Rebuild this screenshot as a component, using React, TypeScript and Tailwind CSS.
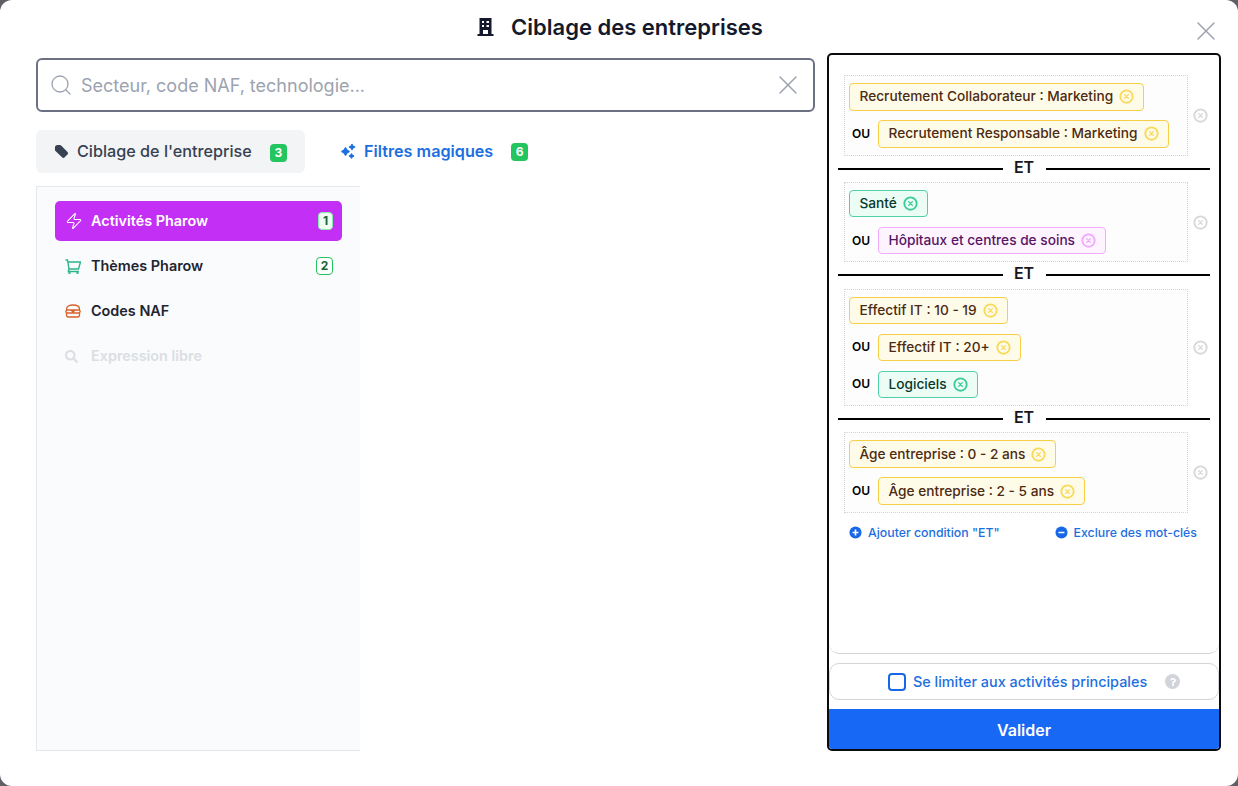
import { LuX, LuSearch, LuZap } from "react-icons/lu";
import { FaSearch, FaQuestion } from "react-icons/fa";

type ChipColor = "yellow" | "green" | "pink";

interface ChipItem {
  label: string;
  color: ChipColor;
}

const chipStyles: Record<ChipColor, { box: string; icon: string }> = {
  yellow: {
    box: "border-[#f6cf47] bg-[#fefce8] text-[#4d2a12]",
    icon: "text-[#f9d95c]",
  },
  green: {
    box: "border-[#4fd0a6] bg-[#ecfdf5] text-[#06392c]",
    icon: "text-[#3ccb9b]",
  },
  pink: {
    box: "border-[#f0abfc] bg-[#fdf4ff] text-[#581563]",
    icon: "text-[#eeaafc]",
  },
};

const groups: ChipItem[][] = [
  [
    { label: "Recrutement Collaborateur : Marketing", color: "yellow" },
    { label: "Recrutement Responsable : Marketing", color: "yellow" },
  ],
  [
    { label: "Santé", color: "green" },
    { label: "Hôpitaux et centres de soins", color: "pink" },
  ],
  [
    { label: "Effectif IT : 10 - 19", color: "yellow" },
    { label: "Effectif IT : 20+", color: "yellow" },
    { label: "Logiciels", color: "green" },
  ],
  [
    { label: "Âge entreprise : 0 - 2 ans", color: "yellow" },
    { label: "Âge entreprise : 2 - 5 ans", color: "yellow" },
  ],
];

const CircleCross = ({ className }: { className: string }) => (
  <svg viewBox="0 0 16 16" fill="none" stroke="currentColor" className={className}>
    <circle cx="8" cy="8" r="6.6" strokeWidth="2" />
    <path d="M6 6l4 4M10 6l-4 4" strokeWidth="1.5" strokeLinecap="round" />
  </svg>
);

const Chip = ({ item }: { item: ChipItem }) => {
  const style = chipStyles[item.color];
  return (
    <div
      className={`flex h-[27.5px] items-center gap-[6px] rounded-[4px] border pl-[9.5px] pr-[9px] text-[13.7px] font-medium ${style.box}`}
    >
      <span>{item.label}</span>
      <CircleCross className={`h-[15px] w-[15px] ${style.icon}`} />
    </div>
  );
};

const Group = ({ items }: { items: ChipItem[] }) => (
  <div className="flex items-center">
    <div className="flex w-[344px] flex-col gap-[9.5px] border border-dotted border-[#d4d4d8] bg-[#fdfdfe] px-[4px] py-[7px]">
      {items.map((item, index) => (
        <div key={item.label} className="flex items-center">
          {index > 0 && (
            <span className="ml-[3px] w-[26px] text-[12px] font-semibold text-black">OU</span>
          )}
          <Chip item={item} />
        </div>
      ))}
    </div>
    <CircleCross className="ml-[5px] h-[15px] w-[15px] text-[#d8d8d8]" />
  </div>
);

const EtSeparator = () => (
  <div className="-ml-[6px] flex h-[26.25px] w-[372px] items-center">
    <div className="h-[2px] flex-1 bg-black" />
    <span className="mb-[4px] w-[43px] text-center text-[16px] font-semibold leading-none text-[#18181b]">ET</span>
    <div className="h-[2px] flex-1 bg-black" />
  </div>
);

const SideItem = ({
  icon,
  label,
  badge,
  active,
  muted,
}: {
  icon: React.ReactNode;
  label: string;
  badge?: string;
  active?: boolean;
  muted?: boolean;
}) => (
  <div
    className={`flex h-[40px] items-center rounded-[5px] pl-[10px] pr-[9px] text-[14.4px] font-semibold ${
      active ? "bg-[#c42ff5] text-white" : muted ? "text-[#dcdee2]" : "text-[#1f2430]"
    }`}
  >
    <span className="flex w-[26px] items-center">{icon}</span>
    <span className="flex-1">{label}</span>
    {badge && (
      <span
        className={`flex h-[18px] items-center justify-center rounded-[4px] border text-[12px] font-bold ${
          active
            ? "w-[15px] border-[#86efac] bg-[#f0fdf4] text-[#166534]"
            : "w-[17px] border-[#22c55e] bg-white text-[#166534]"
        }`}
      >
        {badge}
      </span>
    )}
  </div>
);

const GreenBadge = ({ value }: { value: string }) => (
  <span className="mt-[2px] flex h-[18px] w-[17px] items-center justify-center rounded-[4px] bg-[#22c55e] text-[12px] font-bold text-white">
    {value}
  </span>
);

const App = () => {
  return (
    <div className="relative h-[786px] w-[1238px] overflow-hidden bg-[#5f6066] font-['Inter',sans-serif]">
      <div className="flex h-full flex-col rounded-[12px] bg-white pl-[36px] pr-[17px]">
        <div className="relative flex h-[53px] shrink-0 items-center justify-center pr-[17px] pt-[1px]">
          <svg viewBox="0 0 16 18" className="mr-[17px] h-[18px] w-[17px] text-[#141a2b]" fill="currentColor">
            <path
              fillRule="evenodd"
              d="M2 0h12v16h2v2H0v-2h2V0zm2.500 3v2h2V3h-2zm4.500 0v2h2.500V3H9zM4.500 7v2h2V7h-2zM9 7v2h2.500V7H9zm-3.500 5v4h5v-4h-5z"
            />
          </svg>
          <h1 className="text-[22px] font-semibold text-[#141a2b]">Ciblage des entreprises</h1>
          <LuX className="absolute right-[-1px] top-[15px] h-[32px] w-[32px] text-[#9ca3af]" strokeWidth={1.1} />
        </div>

        <div className="flex min-h-0 flex-1 gap-[12px] pb-[35px]">
          <div className="flex w-[779px] shrink-0 flex-col">
            <div className="mt-[5px] flex h-[54px] shrink-0 items-center rounded-[6px] border-2 border-[#6b7082] pl-[11px] pr-[9px]">
              <LuSearch className="h-[24px] w-[24px] text-[#9ca3af]" strokeWidth={1.3} />
              <span className="ml-[8px] flex-1 text-[18px] text-[#9ca3af]">Secteur, code NAF, technologie...</span>
              <LuX className="h-[32px] w-[32px] text-[#9ca3af]" strokeWidth={1.1} />
            </div>

            <div className="mt-[18px] flex h-[43px] shrink-0 items-center">
              <div className="flex h-full w-[269px] items-center rounded-[6px] bg-[#f3f4f6] pl-[18px] text-[16.2px] font-medium text-[#374151]">
                <svg viewBox="0 0 16 16" className="h-[15px] w-[15px]" fill="#374151">
                  <path d="M1 4a3 3 0 0 1 3-3h2.200a2 2 0 0 1 1.400.600l6.800 6.800a2 2 0 0 1 0 2.800l-3 3a2 2 0 0 1-2.800 0L1.600 7.400A2 2 0 0 1 1 6z" />
                </svg>
                <span className="ml-[8px]">Ciblage de l'entreprise</span>
                <span className="ml-[18px]">
                  <GreenBadge value="3" />
                </span>
              </div>
              <div className="ml-[35px] flex items-center text-[16.2px] font-semibold text-[#1d6fe0]">
                <svg
                  viewBox="0 0 16 16"
                  className="h-[16px] w-[16px]"
                  fill="#1d6fe0"
                  stroke="#1d6fe0"
                  strokeWidth="1.5"
                  strokeLinejoin="round"
                >
                  <path d="M5.500 5 6.800 7.200 9 8.500 6.800 9.800 5.500 12 4.200 9.800 2 8.500 4.200 7.200zM12 1.500l.8 1.700 1.700.8-1.700.8L12 6.500l-.8-1.700-1.700-.8 1.700-.8zM11.500 11l.7 1.300 1.300.7-1.300.7-.7 1.300-.7-1.300-1.300-.7 1.300-.7z" />
                </svg>
                <span className="ml-[8px]">Filtres magiques</span>
                <span className="ml-[18px]">
                  <GreenBadge value="6" />
                </span>
              </div>
            </div>

            <div className="mt-[13px] flex w-[324px] flex-1 flex-col gap-[5px] border-y border-l border-[#e5e7eb] bg-[#f9fbfd] pl-[18px] pr-[18px] pt-[14px]">
              <SideItem active label="Activités Pharow" badge="1" icon={<LuZap className="h-[18px] w-[18px]" strokeWidth={1.4} />} />
              <SideItem
                label="Thèmes Pharow"
                badge="2"
                icon={
                  <svg viewBox="0 0 16 15" className="h-[15px] w-[16px] text-[#2fb58a]" fill="none" stroke="currentColor" strokeWidth="1.400">
                    <path d="M.5 1h2l1.500 9h9.500l2-7H2.800M4 10l-.7 2.500h10.500" />
                    <circle cx="4.500" cy="14" r=".5" />
                    <circle cx="12.500" cy="14" r=".5" />
                  </svg>
                }
              />
              <SideItem
                label="Codes NAF"
                icon={
                  <svg viewBox="0 0 16 16" className="h-[16px] w-[16px] text-[#d9622b]" fill="none" stroke="currentColor" strokeWidth="1.300">
                    <path d="M1.500 7V6c0-2.500 2.500-4 6.500-4s6.500 1.500 6.500 4v1zM1.500 7l-.700 1.500.700 1.500h13l.700-1.500L14.500 7M1.500 10v2c0 1.200.800 2 2 2h9c1.200 0 2-.800 2-2v-2M6 7l2 2 2-2" />
                  </svg>
                }
              />
              <SideItem muted label="Expression libre" icon={<FaSearch className="h-[13px] w-[13px] text-[#dcdee2]" />} />
            </div>
          </div>

          <div className="flex h-[698px] w-[394px] shrink-0 flex-col overflow-hidden rounded-[5px] border-2 border-[#0b0b0f] bg-white">
            <div className="flex-1 rounded-b-[10px] border-b border-[#d4d4d8] pl-[15px] pt-[20px]">
              {groups.map((items, index) => (
                <div key={items[0].label}>
                  {index > 0 && <EtSeparator />}
                  <Group items={items} />
                </div>
              ))}
              <div className="mt-[11px] flex items-center pl-[5px] text-[12.3px] font-medium text-[#1d6fe0]">
                <svg viewBox="0 0 14 14" className="h-[13px] w-[13px]" fill="#1668e8">
                  <circle cx="7" cy="7" r="6.500" />
                  <path d="M7 3.800v6.400M3.800 7h6.400" stroke="white" strokeWidth="1.800" />
                </svg>
                <span className="ml-[6px]">Ajouter condition "ET"</span>
                <svg viewBox="0 0 14 14" className="ml-[55px] h-[13px] w-[13px]" fill="#1668e8">
                  <circle cx="7" cy="7" r="6.500" />
                  <path d="M3.800 7h6.400" stroke="white" strokeWidth="1.800" />
                </svg>
                <span className="ml-[6px]">Exclure des mot-clés</span>
              </div>
            </div>
            <div className="mt-[9px] flex h-[37px] shrink-0 items-center rounded-[10px] border border-[#d4d4d8] pl-[58px] text-[14.4px] font-medium text-[#1d6fe0]">
              <span className="h-[18px] w-[18px] rounded-[4px] border-2 border-[#1668e8] bg-white" />
              <span className="ml-[7px]">Se limiter aux activités principales</span>
              <span className="ml-[18px] flex h-[15px] w-[15px] items-center justify-center rounded-full bg-[#d1d5db]">
                <FaQuestion className="h-[8px] w-[8px] text-white" />
              </span>
            </div>
            <div className="mt-[9px] flex h-[40px] shrink-0 items-center justify-center bg-[#1668f5] pt-[1px] text-[16px] font-semibold text-white">
              Valider
            </div>
          </div>
        </div>
      </div>
    </div>
  );
};

export default App;
